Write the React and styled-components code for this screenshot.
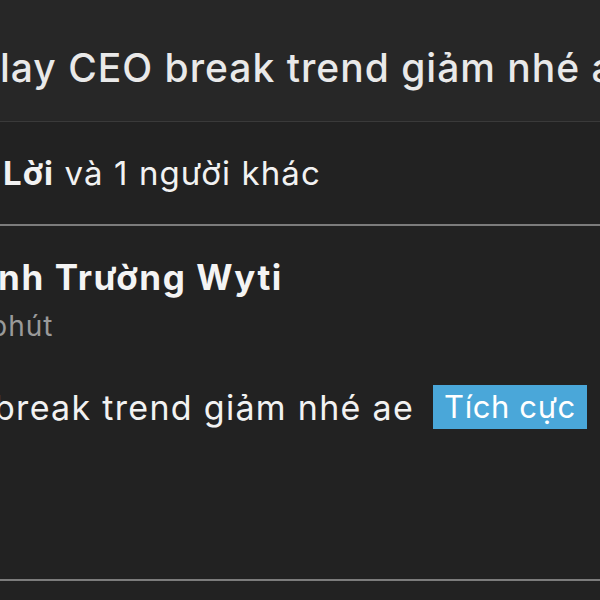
import React from "react";
import styled, { createGlobalStyle } from "styled-components";

const Global = createGlobalStyle`
  html, body { margin: 0; padding: 0; background: #222222; }
  body { font-family: Inter, "Noto Sans", "Liberation Sans", sans-serif; -webkit-font-smoothing: antialiased; }
`;

const Page = styled.div`
  width: 600px;
  height: 600px;
  overflow: hidden;
  background: #222222;
  display: flex;
  flex-direction: column;
`;

const Header = styled.header`
  height: 121px;
  flex: none;
  background: #272727;
  display: flex;
  align-items: center;
  border-bottom: 1px solid #3a3a3a;
  overflow: hidden;
`;

const Title = styled.h1`
  margin: 14px 0 0 0;
  font-size: 39px;
  font-weight: 500;
  color: #e9e9e9;
  white-space: nowrap;
  letter-spacing: 1px;
`;

const LikesRow = styled.div`
  height: 104px;
  flex: none;
  display: flex;
  align-items: center;
  border-bottom: 2px solid #7c7c7c;
  padding-left: 3px;
  font-size: 33px;
  color: #f2f2f2;
  white-space: nowrap;
  letter-spacing: 1.1px;
  box-sizing: border-box;
`;

const Strong = styled.b`
  font-weight: 700;
`;

const Comment = styled.section`
  height: 355px;
  flex: none;
  border-bottom: 2px solid #7c7c7c;
  display: flex;
  flex-direction: column;
  padding-top: 30px;
  box-sizing: border-box;
`;

const Name = styled.div`
  font-size: 35px;
  font-weight: 700;
  color: #f4f4f4;
  white-space: nowrap;
  line-height: 42px;
  letter-spacing: 1.6px;
  margin-left: -2px;
`;

const Time = styled.div`
  font-size: 28px;
  color: #9a9a9a;
  line-height: 34px;
  margin-top: 11px;
  letter-spacing: 1px;
  margin-left: -10px;
`;

const Body = styled.div`
  display: flex;
  align-items: center;
  gap: 19px;
  margin-top: 42px;
  margin-left: -6px;
  white-space: nowrap;
  font-size: 34px;
  letter-spacing: 1.3px;
  color: #f2f2f2;
`;

const Badge = styled.span`
  background: #4aa7d9;
  color: #ffffff;
  font-size: 31px;
  letter-spacing: 0.6px;
  padding: 0 11px;
  height: 44px;
  line-height: 44px;
  display: inline-block;
`;

export default function App() {
  return (
    <Page>
      <Global />
      <Header>
        <Title>lay CEO break trend giảm nhé ae</Title>
      </Header>
      <LikesRow>
        <span>
          <Strong>Lời</Strong> và 1 người khác
        </span>
      </LikesRow>
      <Comment>
        <Name>nh Trường Wyti</Name>
        <Time>phút</Time>
        <Body>
          <span>break trend giảm nhé ae</span>
          <Badge>Tích cực</Badge>
        </Body>
      </Comment>
    </Page>
  );
}
